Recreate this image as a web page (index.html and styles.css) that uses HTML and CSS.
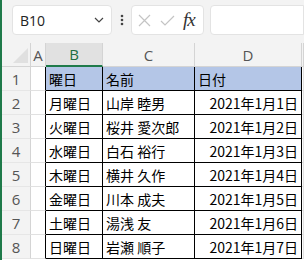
FILE: index.html
```html
<!DOCTYPE html>
<html lang="ja">
<head>
  <meta charset="UTF-8" />
  <title>Sheet</title>
  <link rel="stylesheet" href="styles.css">
</head>
<body>
  <div class="app">
    <div class="toolbar">
      <div class="namebox">
        <span>B10</span>
        <svg width="10" height="6" viewBox="0 0 10 6"><path d="M1 1 L5 5 L9 1" fill="none" stroke="#444" stroke-width="1.2"/></svg>
      </div>
      <svg class="dots" width="4" height="12" viewBox="0 0 4 12">
        <circle cx="2" cy="2" r="1.3" fill="#444"/>
        <circle cx="2" cy="6" r="1.3" fill="#444"/>
        <circle cx="2" cy="10" r="1.3" fill="#444"/>
      </svg>
      <div class="fxbox">
        <svg width="13" height="13" viewBox="0 0 13 13"><path d="M1 1 L12 12 M12 1 L1 12" stroke="#c4c4c4" stroke-width="1.2"/></svg>
        <svg width="15" height="11" viewBox="0 0 15 11"><path d="M1 6 L5 10 L14 1" fill="none" stroke="#c4c4c4" stroke-width="1.2"/></svg>
        <span class="fx">fx</span>
      </div>
      <div class="formula"></div>
    </div>

    <div class="grid">
      <div class="hd corner"><span class="tri"></span></div>
      <div class="hd">A</div>
      <div class="hd sel">B</div>
      <div class="hd">C</div>
      <div class="hd">D</div>
      <div class="hd"></div>

      <div class="rh">1</div><div class="c a"></div>
      <div class="c t head">曜日</div><div class="c t head">名前</div><div class="c t head">日付</div><div class="c"></div>

      <div class="rh">2</div><div class="c a"></div>
      <div class="c t">月曜日</div><div class="c t">山岸 睦男</div><div class="c t num">2021年1月1日</div><div class="c"></div>

      <div class="rh">3</div><div class="c a"></div>
      <div class="c t">火曜日</div><div class="c t">桜井 愛次郎</div><div class="c t num">2021年1月2日</div><div class="c"></div>

      <div class="rh">4</div><div class="c a"></div>
      <div class="c t">水曜日</div><div class="c t">白石 裕行</div><div class="c t num">2021年1月3日</div><div class="c"></div>

      <div class="rh">5</div><div class="c a"></div>
      <div class="c t">木曜日</div><div class="c t">横井 久作</div><div class="c t num">2021年1月4日</div><div class="c"></div>

      <div class="rh">6</div><div class="c a"></div>
      <div class="c t">金曜日</div><div class="c t">川本 成夫</div><div class="c t num">2021年1月5日</div><div class="c"></div>

      <div class="rh">7</div><div class="c a"></div>
      <div class="c t">土曜日</div><div class="c t">湯浅 友</div><div class="c t num">2021年1月6日</div><div class="c"></div>

      <div class="rh">8</div><div class="c a"></div>
      <div class="c t">日曜日</div><div class="c t">岩瀬 順子</div><div class="c t num">2021年1月7日</div><div class="c"></div>
    </div>
  </div>
</body>
</html>
```

FILE: styles.css
```css
html, body {
  margin: 0;
  padding: 0;
  height: 100%;
  overflow: hidden;
  background: #fff;
}

.app {
  border-left: 2px solid #1f7a4a;
  height: 100%;
  font-family: "Noto Sans CJK JP", sans-serif;
}

.toolbar {
  height: 43px;
  box-sizing: border-box;
  padding-top: 5px;
  padding-left: 10px;
  background: #f3f3f3;
  display: flex;
  align-items: flex-start;
}

.namebox {
  width: 100px;
  height: 30px;
  box-sizing: border-box;
  background: #fff;
  border: 1px solid #e3e3e3;
  border-radius: 4px;
  display: flex;
  align-items: center;
  justify-content: space-between;
  padding: 0 7px 0 7px;
  font-family: "Open Sans", "Noto Sans", sans-serif;
  font-size: 14px;
  color: #222;
}

.dots {
  margin: 9px 7px 0 8px;
}

.fxbox {
  width: 73px;
  height: 30px;
  box-sizing: border-box;
  background: #fff;
  border: 1px solid #e3e3e3;
  border-radius: 4px;
  display: flex;
  align-items: center;
  gap: 9px;
  padding-left: 6px;
}

.fx {
  font-family: "Liberation Serif", serif;
  font-style: italic;
  font-size: 19px;
  color: #333;
  margin-left: -1px;
  letter-spacing: -1px;
}

.formula {
  flex: 1;
  height: 30px;
  margin-left: 6px;
  background: #fff;
  border: 1px solid #e3e3e3;
  border-radius: 4px 0 0 4px;
  box-sizing: border-box;
}

.grid {
  display: grid;
  grid-template-columns: 29px 15px 57px 92px 107px 1fr;
  grid-auto-rows: 24px;
}

.grid > div {
  box-sizing: border-box;
  border-right: 1px solid #e1e1e1;
  border-bottom: 1px solid #e1e1e1;
}

.hd, .rh {
  background: #f3f3f3;
  color: #555;
  font-family: "Open Sans", "Noto Sans", sans-serif;
  font-size: 15px;
  display: flex;
  align-items: center;
  justify-content: center;
}

.grid > .hd, .grid > .rh {
  border-right: 1px solid #d4d4d4;
}

.grid > .hd {
  border-bottom: 1px solid #d4d4d4;
}

.grid > .rh {
  border-bottom: 1px solid #e6e6e6;
}

.corner {
  position: relative;
}

.tri {
  position: absolute;
  left: 11px;
  top: 5px;
  width: 15px;
  height: 15px;
  background: #e0e0e0;
  clip-path: polygon(100% 0, 100% 100%, 0 100%);
}

.grid > .sel {
  background: #e1e1e1;
  color: #1f6e43;
  border-bottom: 2px solid #1f7a4a;
}

.grid > .a {
  border-right: 1px solid #000;
}

.grid > .t {
  border-right: 1px solid #000;
  border-bottom: 1px solid #000;
}

.t {
  font-size: 14px;
  color: #000;
  padding: 0 3px;
  display: flex;
  align-items: center;
  white-space: nowrap;
  overflow: hidden;
}

.head {
  background: #b4c6e7;
}

.num {
  justify-content: flex-end;
}
```
